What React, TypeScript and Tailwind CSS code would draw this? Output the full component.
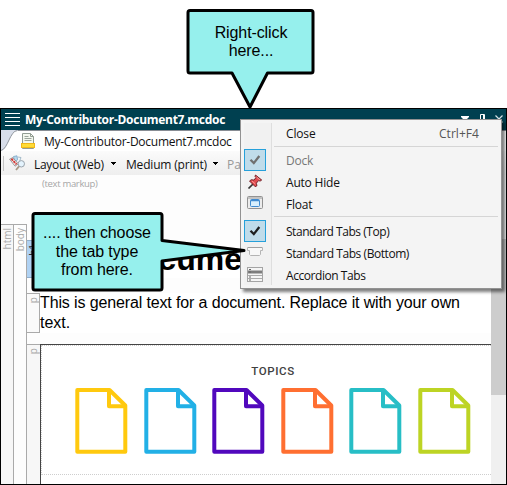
import type { ReactNode } from "react";

const ui = "font-['Open_Sans','Noto_Sans',sans-serif]";
const arial = "font-['Liberation_Sans',Arial,sans-serif]";

const topics = ["#ffc90e", "#22b0e6", "#5108bd", "#ff6f31", "#27bec6", "#bdd424"];

function PageIcon({ color }: { color: string }) {
  return (
    <svg className="h-[66px] w-[53px] shrink-0" viewBox="0 0 53 66" fill="none" stroke={color} strokeWidth="4" strokeLinejoin="round">
      <path d="M2.3 2H34.5L50.3 17.5V63.7H2.3Z" />
      <path d="M34 2V18.3H50" />
    </svg>
  );
}

function Check({ faded = false }: { faded?: boolean }) {
  return (
    <span className="flex size-[22px] shrink-0 items-center justify-center border border-[#26a0da] bg-[#c0dcea]">
      <svg className="size-3" viewBox="0 0 12 12" fill="none" stroke={faded ? "#707070" : "#202020"} strokeWidth="2.3">
        <path d="M1.5 5.8 4.8 9.1 10.3 2" />
      </svg>
    </span>
  );
}

function PinIcon() {
  return (
    <svg className="size-4" viewBox="0 0 16 16">
      <path d="m1.5 14.5 5-5" stroke="#333" strokeWidth="1.7" />
      <path d="m8.5 1 6.2 5-1.6 1.1-1.5-.5-2.3 2.6.7 2.5-1.8 1L2.5 7l1.8-1.3 2.6.4L9 3.6 8 2.4Z" fill="#df4b50" stroke="#6a1c23" strokeWidth=".9" />
      <path d="m9.4 3 3.6 3M5 7l3.4 3" stroke="#ff9a96" />
    </svg>
  );
}

function FloatIcon() {
  return (
    <svg className="-mt-1 h-[13px] w-4" viewBox="0 0 16 13">
      <rect x=".5" y=".5" width="15" height="12" rx="1" fill="#ececec" stroke="#929292" />
      <path d="M1 2h14" stroke="#c2c2c2" strokeWidth="2" />
      <rect x="3.5" y="3.5" width="9" height="7" rx="1" fill="#d8effd" stroke="#408bd0" />
      <path d="M4 4.5h8" stroke="#408bd0" strokeWidth="1.5" />
    </svg>
  );
}

function BottomTabIcon() {
  return (
    <svg className="-mt-1 h-4 w-4" viewBox="0 0 16 16">
      <path d="M.5 4.5h15v3h-2v4l-1 1h-9l-1-1v-4h-2Z" fill="#f8f8f8" stroke="#b4b4b4" />
      <path d="M1 4.5h14" stroke="#a0a0a0" />
    </svg>
  );
}

function AccordionIcon() {
  return (
    <svg className="-mt-[2px] h-[15px] w-4" viewBox="0 0 16 15">
      <rect x=".5" y=".5" width="15" height="14" fill="#f5f5f5" stroke="#a4a4a4" />
      <path d="M1 5h14" stroke="#7d7d7d" strokeWidth="3" />
      <path d="M1 8.5h14M1 11.5h14" stroke="#aaa" />
      <path d="M2 2.5h2M2 5h2M2 10h2M2 13h2" stroke="#666" />
    </svg>
  );
}

function MenuItem({ icon, label, tracking, shortcut, disabled = false }: { icon?: ReactNode; label: string; tracking: string; shortcut?: string; disabled?: boolean }) {
  return (
    <div className={`flex h-[22px] items-center ${disabled ? "text-[#777]" : "text-[#111]"}`}>
      <span className="-ml-px flex w-[30px] justify-center pr-[4px]">{icon}</span>
      <span className={`ml-[14px] pt-[2px] whitespace-nowrap ${tracking}`}>{label}</span>
      {shortcut && <span className="mr-[22px] ml-auto pt-[2px] tracking-[0.05px] text-[#555]">{shortcut}</span>}
    </div>
  );
}

function ContextMenu() {
  return (
    <div className={`absolute top-[119px] left-[240px] h-[170px] w-[262px] border border-[#929292] bg-[#f4f4f4] pt-[2px] pl-[2px] text-[12px] shadow-[3px_3px_3px_rgba(0,0,0,0.5)] ${ui}`}>
      <div className="absolute top-[3px] bottom-[3px] left-[3px] w-[28px] border-r border-[#dedede] bg-[#f1f1f1]" />
      <div className="relative">
        <MenuItem label="Close" tracking="tracking-[-0.15px]" shortcut="Ctrl+F4" />
        <div className="mt-[2px] mr-[3px] mb-[2px] ml-[31px] h-px bg-[#d5d5d5]" />
        <MenuItem icon={<Check faded />} label="Dock" tracking="tracking-[-0.2px]" disabled />
        <MenuItem icon={<PinIcon />} label="Auto Hide" tracking="tracking-[-0.2px]" />
        <MenuItem icon={<FloatIcon />} label="Float" tracking="tracking-[-0.2px]" />
        <div className="mt-[1px] mr-[3px] mb-[3px] ml-[31px] h-px bg-[#d5d5d5]" />
        <MenuItem icon={<Check />} label="Standard Tabs (Top)" tracking="tracking-[-0.46px]" />
        <MenuItem icon={<BottomTabIcon />} label="Standard Tabs (Bottom)" tracking="tracking-[-0.44px]" />
        <MenuItem icon={<AccordionIcon />} label="Accordion Tabs" tracking="tracking-[-0.44px]" />
      </div>
    </div>
  );
}

function FileIcon() {
  return (
    <svg className="h-4 w-[14px]" viewBox="0 0 14 16">
      <path d="M1.5.5h8l3 3v12h-11Z" fill="#f3f7ee" stroke="#929d93" />
      <path d="M9.5.5v3h3" fill="none" stroke="#929d93" />
      <path d="M3.5 3.5h4M3.5 5.5h7M3.5 7.5h7" stroke="#9ba59c" />
      <rect x=".5" y="10.5" width="13" height="4" fill="#ffdc35" stroke="#f0b81c" />
    </svg>
  );
}

function LayoutIcon() {
  return (
    <svg className="h-4 w-[17px]" viewBox="0 0 17 16">
      <path d="M4.5 1.5 8 .8l.6 4-3 2Z" fill="#b9d8ee" stroke="#6f9dbf" strokeWidth=".7" />
      <path d="m9 2 3 .5-1.5 4" fill="#eef6fa" stroke="#86a5b8" strokeWidth=".7" />
      <path d="m.6 4.2 3.2-1.6 5.6 6.2-3.4 2.4Z" fill="#f7f3f3" stroke="#777" strokeWidth=".7" />
      <path d="m2.4 3.8 5.2 5.6" stroke="#d23c37" strokeWidth="2" strokeDasharray="2.4 .7" />
      <circle cx="12.3" cy="8.8" r="3.2" fill="#e4f3fd" stroke="#9aa3ab" />
      <path d="m10 11.4-3 3.6" stroke="#a89a86" strokeWidth="1.8" />
    </svg>
  );
}

const Caret = () => (
  <svg className="mt-px h-[3px] w-[5px]" viewBox="0 0 5 3" shapeRendering="crispEdges">
    <path d="M0 0h5v1H4v1H3v1H2V2H1V1H0Z" />
  </svg>
);

function TitleBar() {
  return (
    <div className="flex h-[21px] shrink-0 items-center bg-[#004050] text-white">
      <span className="ml-1 flex w-[15px] flex-col gap-[3px]">
        {[0, 1, 2, 3].map((n) => <i key={n} className="h-px bg-white" />)}
      </span>
      <span className={`ml-[5px] text-[12px] font-bold tracking-[-0.28px] whitespace-nowrap ${ui}`}>My-Contributor-Document7.mcdoc</span>
      <svg className="mr-[3px] ml-auto h-3 w-[44px]" viewBox="0 0 44 12">
        <path d="M2 2h8v1L6 7 2 3Z" fill="#fff" />
        <path d="M21.5 11V.5h4V11M24.5 1v10" fill="none" stroke="#fff" />
        <path d="m36.5 1.5 7 7m0-7-7 7" stroke="#d5e2e5" strokeWidth="1.2" />
      </svg>
    </div>
  );
}

function GutterLabel({ children }: { children: string }) {
  return <span className={`mt-[3px] block rotate-180 text-[10px] leading-3 [writing-mode:vertical-rl] ${ui}`}>{children}</span>;
}

function DocumentView() {
  return (
    <div className="flex min-h-0 flex-1 bg-[#fdfdfd]">
      <div className="flex min-w-0 flex-1 flex-col">
        <div className={`h-[49px] shrink-0 pt-[1px] pl-[41px] text-[9.5px] leading-4 tracking-[-0.32px] text-[#a6a6a6] ${ui}`}>(text markup)</div>
        <div className="flex min-h-0 flex-1 text-[#aaa]">
          <div className="w-[13px] shrink-0 border-t border-r border-[#aaa] bg-[#f7f7f7]">
            <GutterLabel>html</GutterLabel>
          </div>
          <div className="w-[13px] shrink-0 border-t border-r border-[#aaa]">
            <GutterLabel>body</GutterLabel>
          </div>
          <div className="flex min-w-0 flex-1 flex-col">
            <div className="mt-4 flex h-[38px] shrink-0">
              <div className="w-[13px] border-y border-[#8faecc] bg-[#b0d2f3] text-[#333]">
                <GutterLabel>h1</GutterLabel>
              </div>
              <h1 className={`flex-1 bg-white pl-[1px] text-[32px] leading-[38px] font-bold whitespace-nowrap text-black ${arial}`}>New Document Title</h1>
            </div>
            <div className="mt-[15px] flex h-10 shrink-0">
              <div className="w-[13px] border border-l-0 border-[#aaa] bg-[#fafafa]"><GutterLabel>p</GutterLabel></div>
              <p className={`flex-1 bg-white text-[16px] leading-5 text-black ${arial}`}>
                <span className="tracking-[-0.13px] whitespace-nowrap">This is general text for a document. Replace it with your own</span><br />text.
              </p>
            </div>
            <div className="mt-[11px] flex min-h-0 flex-1">
              <div className="w-[13px] shrink-0 border-t border-[#aaa] bg-[#f7f7f7]"><GutterLabel>p</GutterLabel></div>
              <div className="flex min-w-0 flex-1 flex-col border-t border-l border-[#444] bg-white">
                <div className="flex h-[130px] flex-col border border-r-0 border-dotted border-[#cecece]">
                  <div className="mt-[18px] h-[14px] text-center font-['Roboto',sans-serif] text-[11.5px] leading-[14px] font-medium tracking-[0.6px] text-[#414141]">
                    <span className="ml-[13px]">TOPICS</span>
                  </div>
                  <div className="mt-[10px] ml-[33px] flex gap-[15.5px]">
                    {topics.map((color) => <PageIcon key={color} color={color} />)}
                  </div>
                </div>
              </div>
            </div>
          </div>
        </div>
      </div>
      <div className="flex w-[15px] shrink-0 flex-col bg-[#f0f0f0]">
        <div className="mt-[64px] h-[156px] bg-[#cdcdcd]" />
      </div>
    </div>
  );
}

export default function App() {
  return (
    <div className="relative h-[485px] w-[507px] overflow-hidden bg-white pt-[108px]">
      <div className="flex h-[377px] flex-col border border-black">
        <TitleBar />
        <div className="flex h-[21px] shrink-0 bg-[#d8deea]">
          <svg className="h-[21px] w-[17px] shrink-0" viewBox="0 0 17 21">
            <path d="M0 21C7 20 9 1 16 1h1v20Z" fill="#fff" />
            <path d="M0 20.5C7 19 9 .5 16.5 .5" fill="none" stroke="#888d94" strokeWidth=".9" />
          </svg>
          <div className="flex flex-1 items-center border-t border-[#888d94] bg-white pl-[3px]">
            <FileIcon />
            <span className={`ml-[9px] pt-px text-[12px] tracking-[-0.27px] whitespace-nowrap text-[#111] ${ui}`}>My-Contributor-Document7.mcdoc</span>
          </div>
        </div>
        <div className={`flex h-6 shrink-0 items-center bg-linear-to-b from-[#fbfbfb] to-[#eeeeee] text-[12px] whitespace-nowrap text-[#111] ${ui}`}>
          <i className="ml-[2px] h-[15px] w-px bg-[#c5c5c5]" />
          <span className="ml-[5px]"><LayoutIcon /></span>
          <span className="ml-[8px] w-[77px] pt-[3px] tracking-[-0.28px]">Layout (Web)</span>
          <Caret />
          <span className="ml-[10px] w-[87px] pt-[3px] tracking-[-0.18px]">Medium (print)</span>
          <Caret />
          <span className="ml-[9px] pt-[3px] text-[#999]">Page</span>
        </div>
        <DocumentView />
      </div>

      <ContextMenu />

      <svg className="absolute inset-0" width="507" height="300" viewBox="0 0 507 300" fill="#96f0ed" stroke="#000" strokeWidth="3" strokeLinejoin="round">
        <path d="M190 10.5H311Q313 10.5 313 12.5V71Q313 73 311 73H267.5L250 107 232 73H190Q188 73 188 71V12.5Q188 10.5 190 10.5Z" />
        <path d="M35 213.5H160Q162 213.5 162 215.5V240.5L244 250.5 162 261V288Q162 290 160 290H35Q33 290 33 288V215.5Q33 213.5 35 213.5Z" />
      </svg>
      <div className={`absolute top-[24px] left-[188px] w-[126px] text-center text-[16px] leading-[18px] tracking-[-0.1px] text-black ${arial}`}>Right-click<br />here...</div>
      <div className={`absolute top-[224px] left-[33px] w-[128px] text-center text-[16px] leading-[18.5px] tracking-[-0.1px] text-black ${arial}`}>.... then choose<br />the tab type<br />from here.</div>
    </div>
  );
}
